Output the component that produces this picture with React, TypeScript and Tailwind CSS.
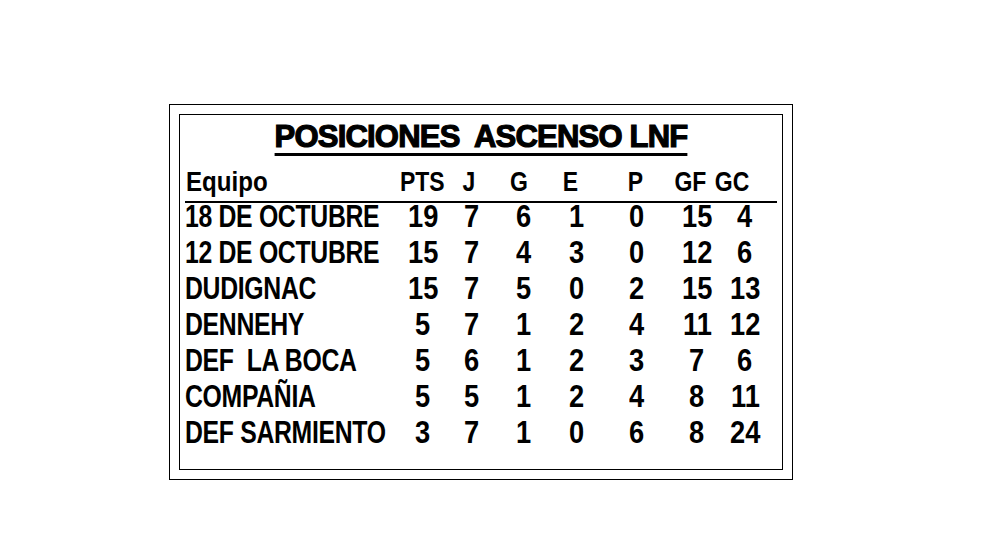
const HEAD_W = ['w-[48px]', 'w-[46px]', 'w-[54px]', 'w-[48px]', 'w-[82px]', 'w-[28px]', 'w-[56px]']
const ROW_W = ['w-[50px]', 'w-[48px]', 'w-[56px]', 'w-[50px]', 'w-[70px]', 'w-[50px]', 'w-[46px]']

const HEADERS = ['PTS', 'J', 'G', 'E', 'P', 'GF', 'GC']

const TEAMS: [string, number[]][] = [
  ['18 DE OCTUBRE', [19, 7, 6, 1, 0, 15, 4]],
  ['12 DE OCTUBRE', [15, 7, 4, 3, 0, 12, 6]],
  ['DUDIGNAC', [15, 7, 5, 0, 2, 15, 13]],
  ['DENNEHY', [5, 7, 1, 2, 4, 11, 12]],
  ['DEF  LA BOCA', [5, 6, 1, 2, 3, 7, 6]],
  ['COMPAÑIA', [5, 5, 1, 2, 4, 8, 11]],
  ['DEF SARMIENTO', [3, 7, 1, 0, 6, 8, 24]],
]

const sans = "font-['Liberation_Sans','Arial',sans-serif] font-bold"

export default function App() {
  return (
    <div className="w-[988px] h-[549px] bg-white pt-[104px] pl-[169px]">
      {/* outer frame */}
      <div className="w-[624px] h-[376px] border border-black p-[9px]">
        {/* inner frame */}
        <div className={`h-full border border-black text-black ${sans}`}>
          <div className="h-[51px] pt-[4px] text-center leading-[36px]">
            <span className="text-[31px] tracking-[-0.8px] whitespace-pre underline decoration-[3px] underline-offset-[6px] [text-decoration-skip-ink:none] [-webkit-text-stroke:1.2px_black]">
              {'POSICIONES  ASCENSO LNF'}
            </span>
          </div>

          <div className="mx-[5px]">
            {/* header row */}
            <div className="flex h-[37px] border-b-2 border-black text-[28px] leading-[32px]">
              <div className="w-[213px] pl-[1px]">
                <span className="inline-block origin-left scale-x-[0.86]">Equipo</span>
              </div>
              {HEADERS.map((h, i) => (
                <div key={h} className={`${HEAD_W[i]} flex justify-center`}>
                  <span className="inline-block shrink-0 scale-x-[0.82]">{h}</span>
                </div>
              ))}
            </div>

            {TEAMS.map(([name, nums]) => (
              <div key={name} className="flex h-9 text-[31px] leading-[27px]">
                <div className="w-[213px] whitespace-pre">
                  <span className="inline-block origin-left scale-x-[0.8] tracking-[-0.4px]">{name}</span>
                </div>
                {nums.map((n, i) => (
                  <div key={i} className={`${ROW_W[i]} flex justify-center`}>
                    <span className="inline-block shrink-0 scale-x-[0.88]">{n}</span>
                  </div>
                ))}
              </div>
            ))}
          </div>
        </div>
      </div>
    </div>
  )
}
